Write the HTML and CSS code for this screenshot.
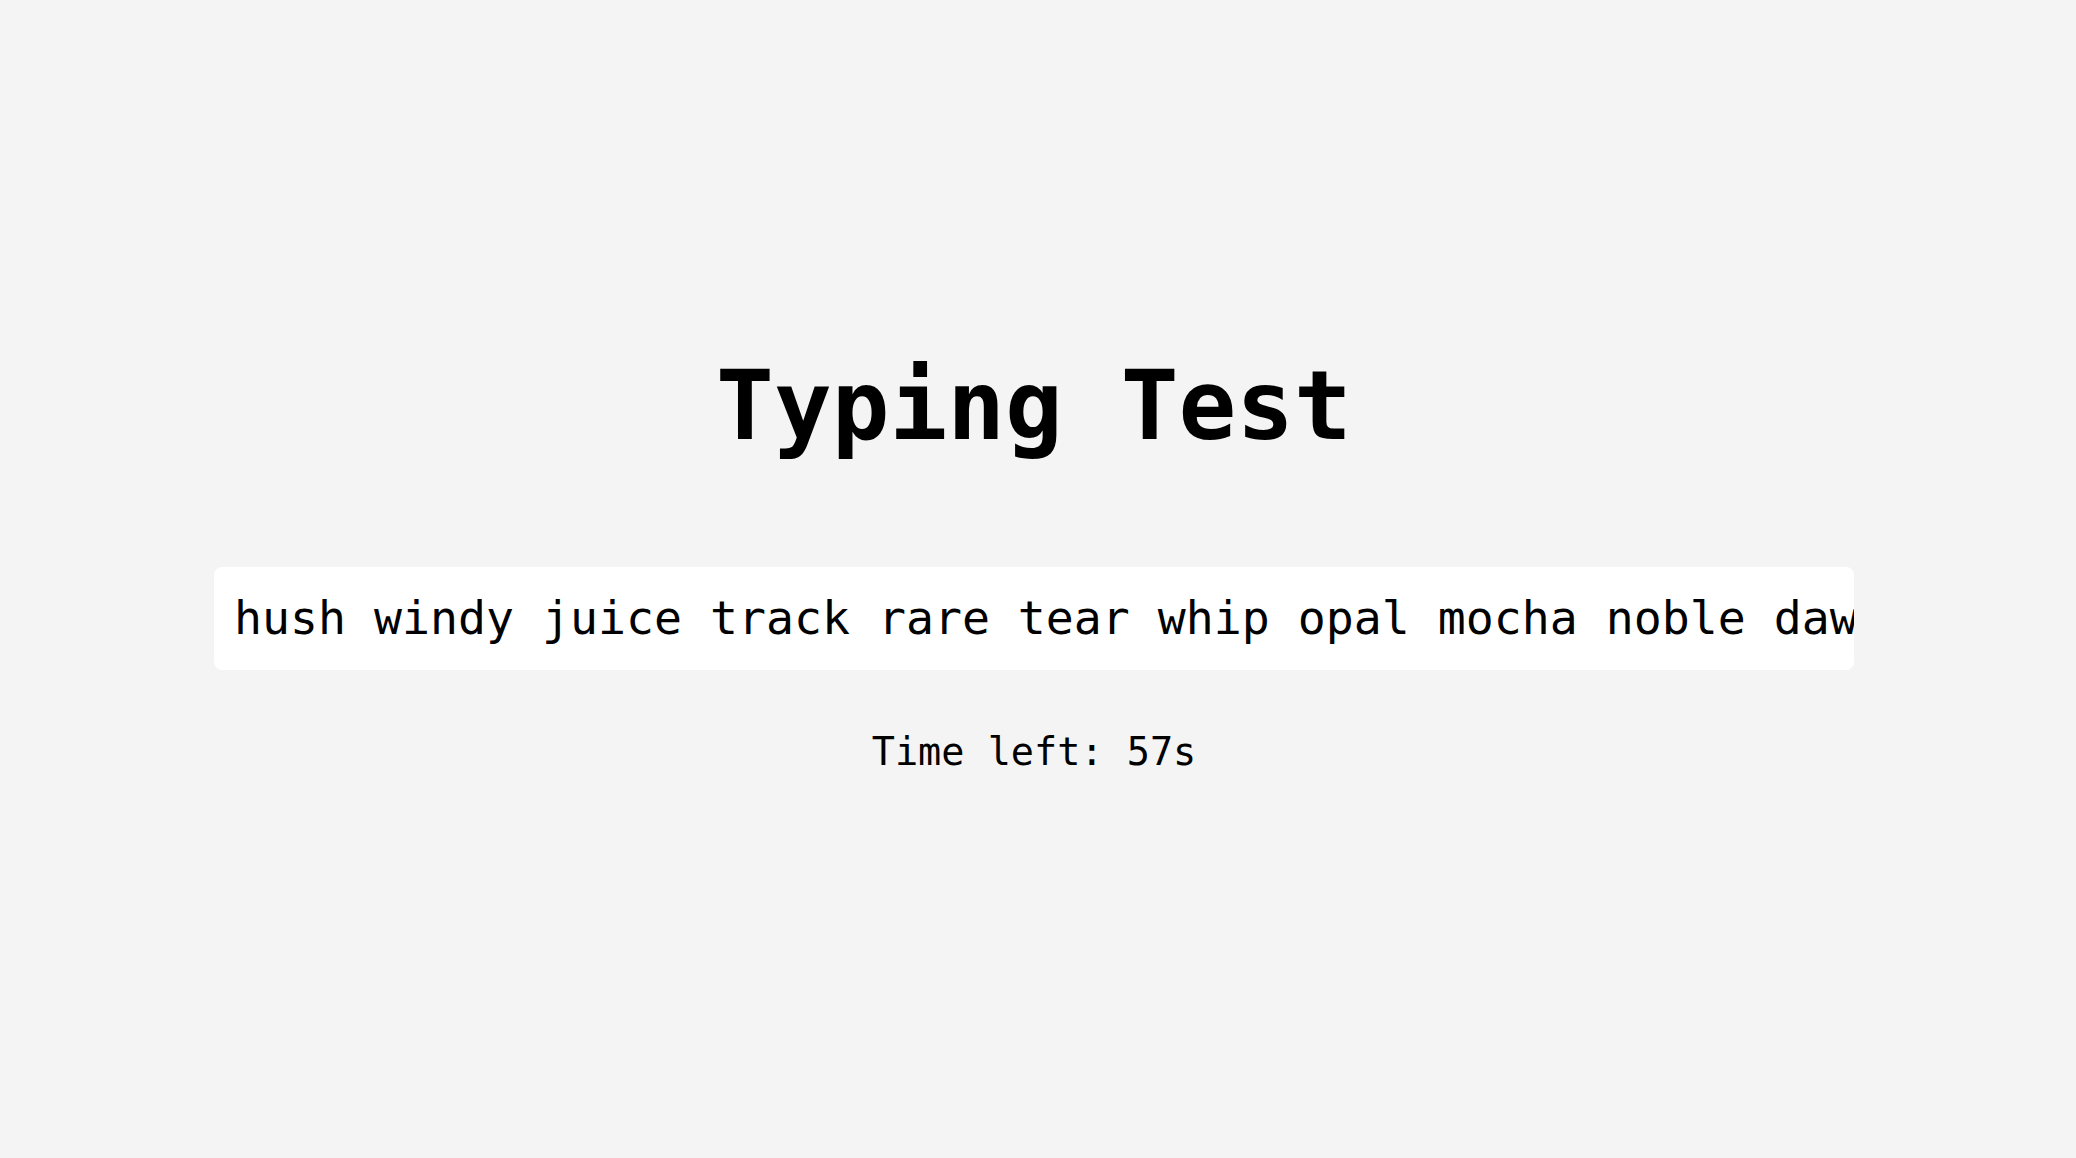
FILE: index.html
```html
<!DOCTYPE html>
<html lang="en">
<head>
<meta charset="utf-8">
<title>Typing Test</title>
<link rel="stylesheet" href="styles.css">
</head>
<body>
<main class="app">
  <h1 class="title">Typing Test</h1>
  <div class="words">hush windy juice track rare tear whip opal mocha noble dawn fable grain lemon quiet</div>
  <div class="timer">Time left: 57s</div>
</main>
</body>
</html>
```
FILE: styles.css
```css
html, body {
  margin: 0;
  padding: 0;
  background: #f4f4f4;
}
body {
  font-family: "DejaVu Sans Mono", monospace;
  color: #000;
}
.app {
  display: flex;
  flex-direction: column;
  align-items: center;
  padding: 350px 8px 0 0;
  box-sizing: border-box;
  min-height: 1158px;
}
.title {
  margin: 0;
  font-size: 96px;
  font-weight: bold;
  line-height: normal;
}
.words {
  margin-top: 105px;
  width: 1640px;
  box-sizing: border-box;
  padding: 24px 0 24px 20px;
  line-height: 55px;
  font-size: 46.5px;
  background: #fff;
  border-radius: 8px;
  white-space: nowrap;
  overflow: hidden;
}
.timer {
  margin-top: 59px;
  font-size: 38.5px;
  line-height: normal;
}
```
